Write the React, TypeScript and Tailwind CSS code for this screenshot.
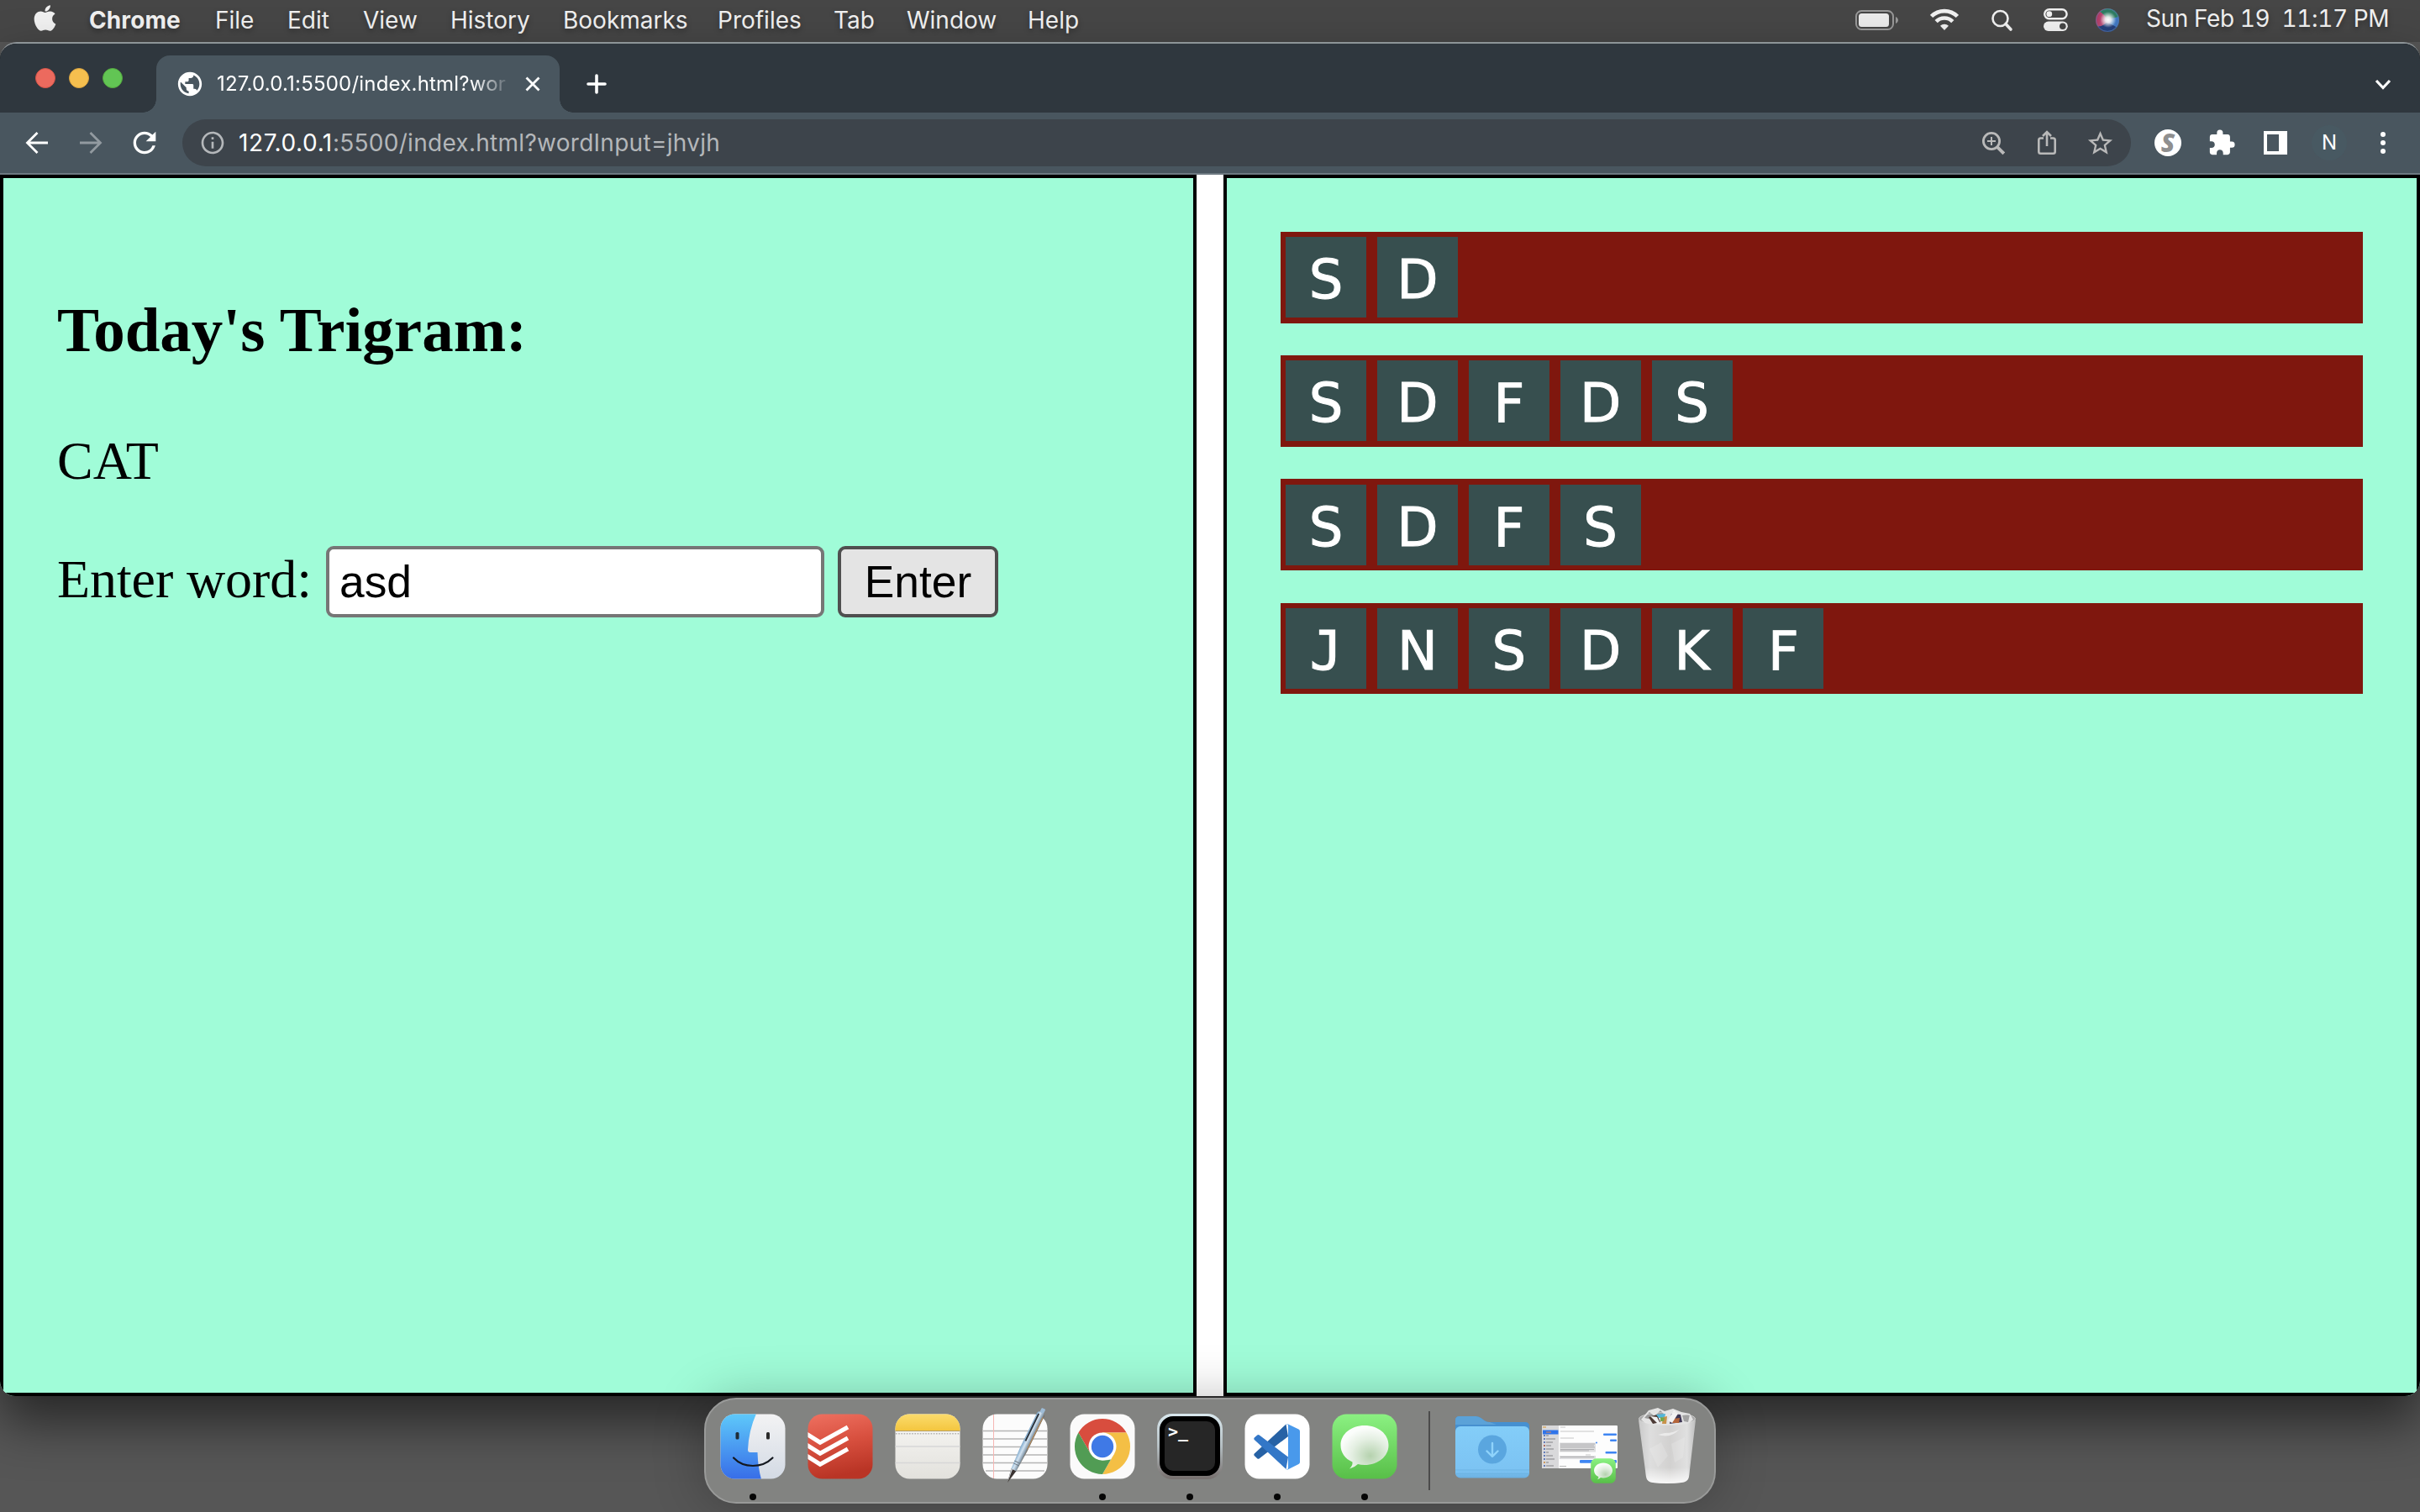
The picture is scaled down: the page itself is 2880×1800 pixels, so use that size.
import type { ReactNode } from "react";
import { FaApple } from "react-icons/fa";
import { MdExtension, MdInfoOutline, MdPublic, MdRefresh, MdStarBorder } from "react-icons/md";

const menuItems = [
  { label: "File", cls: "w-[86px]" },
  { label: "Edit", cls: "w-[90px]" },
  { label: "View", cls: "w-[104px]" },
  { label: "History", cls: "w-[134px]" },
  { label: "Bookmarks", cls: "w-[184px]" },
  { label: "Profiles", cls: "w-[138px]" },
  { label: "Tab", cls: "w-[87px]" },
  { label: "Window", cls: "w-[144px]" },
  { label: "Help", cls: "w-[80px]" },
];

const words = ["SD", "SDFDS", "SDFS", "JNSDKF"];

function MenuBar() {
  return (
    <header className="flex h-[50px] shrink-0 items-start bg-[#464646] pl-[36px] pr-[35px] text-[28px] leading-[48px] text-[#f0f0f0] [text-shadow:0_3px_6px_rgba(0,0,0,0.35)]">
      <FaApple size={35} className="mt-[4px] shrink-0" />
      <span className="ml-[35px] w-[150px] font-bold tracking-[0.1px]">Chrome</span>
      {menuItems.map((m) => (
        <span key={m.label} className={"shrink-0 whitespace-nowrap " + m.cls}>{m.label}</span>
      ))}
      <div className="ml-auto flex items-start">
        <svg width="52" height="48" viewBox="0 0 52 48" className="mr-[37px]">
          <rect x="1" y="13" width="44" height="22" rx="6.5" fill="none" stroke="#989898" strokeWidth="2" />
          <rect x="4" y="16" width="36" height="16" rx="3.5" fill="#ebebeb" />
          <path d="M48 20c4 2 4 6 0 8z" fill="#989898" />
        </svg>
        <svg width="34" height="48" viewBox="0 0 34 48" className="mr-[39px]" fill="none" stroke="#f0f0f0" strokeWidth="4.6">
          <path d="M1.6 19.5C10 11 24 11 32.4 19.5" />
          <path d="M7.2 25.6C12.5 20.2 21.500 20.2 26.800 25.600" />
          <path d="M17 36l-5-5.200c2.600-2.800 7.400-2.800 10 0z" fill="#f0f0f0" stroke="none" />
        </svg>
        <svg width="26" height="48" viewBox="0 0 26 48" className="mr-[36px]" fill="none" stroke="#f0f0f0" strokeWidth="2.6">
          <circle cx="10.500" cy="22" r="9" />
          <path d="M17 28.500l6 6.500" strokeWidth="3.600" strokeLinecap="round" />
        </svg>
        <svg width="29" height="48" viewBox="0 0 29 48" className="mr-[33px]">
          <rect x="1.200" y="11.200" width="26.400" height="11" rx="5.500" fill="none" stroke="#f0f0f0" strokeWidth="2.400" />
          <circle cx="6.800" cy="16.700" r="3.400" fill="#f0f0f0" />
          <rect x="0" y="25.500" width="28.800" height="11.500" rx="5.700" fill="#f0f0f0" />
          <circle cx="22.800" cy="31.200" r="3.800" fill="#464646" />
        </svg>
        <svg width="28" height="48" viewBox="0 0 28 48" className="mr-[32px]">
          <defs>
            <linearGradient id="siri" x1="0" y1="0.4" x2="1" y2="0.6">
              <stop offset="0" stopColor="#b0305c" />
              <stop offset="0.35" stopColor="#b8577f" />
              <stop offset="0.7" stopColor="#4a86c8" />
              <stop offset="1" stopColor="#3b6fc0" />
            </linearGradient>
            <radialGradient id="siriGlow" cx="0.53" cy="0.48" r="0.34">
              <stop offset="0" stopColor="#fff" />
              <stop offset="0.35" stopColor="#fff" stopOpacity="0.85" />
              <stop offset="1" stopColor="#fff" stopOpacity="0" />
            </radialGradient>
          </defs>
          <circle cx="14" cy="24" r="14" fill="url(#siri)" />
          <path d="M5 13.500A14 14 0 0 1 27.500 20Q18 22 14 23Q10 17 5 13.500z" fill="#2f7d63" />
          <path d="M2 31.500A14 14 0 0 0 25 32.500Q18 28 13 27Q7 32 2 31.500z" fill="#24407c" />
          <circle cx="14" cy="24" r="13.400" fill="none" stroke="#5b7fae" strokeWidth="1" strokeOpacity="0.7" />
          <circle cx="14" cy="24" r="14" fill="url(#siriGlow)" />
        </svg>
        <span className="w-[291px] whitespace-pre leading-[45px] tabular-nums tracking-[-0.4px]">Sun Feb 19  11:17 PM</span>
      </div>
    </header>
  );
}

function TabStrip() {
  return (
    <div className="flex h-[82px] items-stretch bg-[#2f373e]">
      <div className="flex items-start gap-4 pl-[42px] pt-[29px]">
        <span className="size-6 rounded-full border border-[#d65549] bg-[#ec6a5e]" />
        <span className="size-6 rounded-full border border-[#d9a33f] bg-[#f5bf4f]" />
        <span className="size-6 rounded-full border border-[#55a93f] bg-[#62c554]" />
      </div>
      <span className="ml-[24px] size-4 self-end bg-[radial-gradient(circle_at_0_0,transparent_15.500px,#49565f_16px)]" />
      <div className="mt-[14px] flex w-[480px] items-center rounded-t-[16px] bg-[#49565f] pl-[23px] text-white">
        <MdPublic size={34} className="shrink-0" />
        <span className="ml-[15px] w-[351px] whitespace-nowrap text-[24px] tracking-[0.2px] [mask-image:linear-gradient(to_right,black_305px,transparent_351px)]">
          127.0.0.1:5500/index.html?wor
        </span>
        <svg width="18" height="18" viewBox="0 0 18 18" className="ml-[16px]" stroke="#fff" strokeWidth="2.800">
          <path d="M1.500 1.500l15 15M16.500 1.500l-15 15" />
        </svg>
      </div>
      <span className="size-4 self-end bg-[radial-gradient(circle_at_100%_0,transparent_15.500px,#49565f_16px)]" />
      <svg width="24" height="24" viewBox="0 0 24 24" className="ml-[16px] mt-[36px]" stroke="#fff" strokeWidth="3.600" strokeLinecap="round">
        <path d="M12 2v20M2 12h20" />
      </svg>
      <svg width="20" height="14" viewBox="0 0 20 14" className="ml-auto mr-[34px] mt-[42px]" fill="none" stroke="#fff" strokeWidth="3.200">
        <path d="M2 2l8 8.500 8-8.500" />
      </svg>
    </div>
  );
}

function Toolbar() {
  return (
    <div className="flex h-[74px] items-center border-b-2 border-[#6d7981] bg-[#49565f] pl-[30px] pr-[41px]">
      <svg width="28" height="28" viewBox="0 0 28 28" fill="none" stroke="#fff" strokeWidth="2.800">
        <path d="M27 14H3M14.500 2L2.500 14l12 12" />
      </svg>
      <svg width="28" height="28" viewBox="0 0 28 28" className="ml-[36px]" fill="none" stroke="#929aa0" strokeWidth="2.800">
        <path d="M1 14h24M13.500 2l12 12-12 12" />
      </svg>
      <MdRefresh size={40} className="ml-[30px] text-white" />
      <div className="ml-[25px] flex h-[56px] w-[2319px] items-center rounded-full bg-[#3d444b] pl-[20px] pr-[19px] text-[#b4b7ba]">
        <MdInfoOutline size={32} />
        <span className="ml-[15px] whitespace-nowrap text-[28px] tracking-[0.28px]">
          <span className="tracking-[0.6px] text-white">127.0.0.1</span>:5500/index.html?wordInput=jhvjh
        </span>
        <svg width="28" height="30" viewBox="0 0 28 30" className="ml-auto" fill="none" stroke="#b9b9b9" strokeWidth="2.800">
          <circle cx="12" cy="13" r="9.600" />
          <path d="M18.800 19.800l8 8" strokeWidth="3.800" />
          <path d="M12 8v10M7 13h10" strokeWidth="2" />
        </svg>
        <svg width="24" height="30" viewBox="0 0 24 30" className="ml-[38px]" fill="none" stroke="#b9b9b9" strokeWidth="2.600">
          <path d="M8 9.500H4.500Q2.300 9.500 2.300 11.700V25.500Q2.300 27.700 4.500 27.700H19.500Q21.700 27.700 21.700 25.500V11.700Q21.700 9.500 19.500 9.500H16M12 19V2.500M7 7l5-5 5 5" />
        </svg>
        <MdStarBorder size={35} className="ml-[34px] text-[#b9b9b9]" />
      </div>
      <div className="ml-auto flex items-center">
        <span className="flex size-8 items-center justify-center rounded-full bg-white font-['Open_Sans'] text-[30px] font-extrabold italic leading-none text-[#8f8f8f]">S</span>
        <MdExtension size={34} className="ml-[31px] text-white" />
        <span className="ml-[33px] size-7 border-y-[4px] border-l-[4px] border-r-[10px] border-white" />
        <span className="ml-[29px] flex size-[42px] items-center justify-center rounded-full bg-[#485962] text-[24px] text-white">N</span>
        <span className="ml-[40px] flex flex-col gap-1">
          <span className="size-[6px] rounded-full bg-white" />
          <span className="size-[6px] rounded-full bg-white" />
          <span className="size-[6px] rounded-full bg-white" />
        </span>
      </div>
    </div>
  );
}

function WordRow({ word }: { word: string }) {
  return (
    <div className="flex h-[108.500px] items-center gap-[12.900px] bg-[#7f170e] pl-[6px]">
      {word.split("").map((ch, i) => (
        <span
          key={i}
          className={
            "h-[96px] w-[96px] bg-[#374f4f] text-center text-[64px] leading-[103px] text-white [-webkit-text-stroke:1px_white] " +
            (ch === "J" ? "font-['DejaVu_Sans_Mono']" : "font-['DejaVu_Sans']")
          }
        >
          {ch}
        </span>
      ))}
    </div>
  );
}

function Page() {
  return (
    <main className="flex h-[1454px] justify-between bg-white text-black">
      <section className="w-[1424px] border-4 border-black bg-[#a0fcd8] px-[64px] pt-[139px] font-['Liberation_Serif']">
        <h2 className="text-[75px] font-bold leading-[84px]">Today&apos;s Trigram:</h2>
        <p className="mt-[78px] text-[64px] leading-[72px]">CAT</p>
        <form className="mt-[65px] flex h-[85px] items-start" onSubmit={(e) => e.preventDefault()}>
          <label htmlFor="word" className="w-[320px] whitespace-nowrap text-[64px] leading-[79px] tracking-[-0.1px]">Enter word:</label>
          <input
            id="word"
            defaultValue="asd"
            className="h-[85px] w-[593px] rounded-[9px] border-4 border-[#767676] bg-white px-[12px] font-['Liberation_Sans'] text-[53.333px] outline-none"
          />
          <button className="ml-[16px] h-[85px] w-[191px] rounded-[9px] border-4 border-[#4f4f4f] bg-[#e4e4e4] text-center font-['Liberation_Sans'] text-[53.333px] leading-[77px]">
            Enter
          </button>
        </form>
      </section>
      <section className="flex w-[1424px] flex-col gap-[38.700px] border-4 border-black bg-[#a0fcd8] px-[64px] pt-[64px]">
        {words.map((w) => (
          <WordRow key={w} word={w} />
        ))}
      </section>
    </main>
  );
}

function DockItem({ running, children }: { running?: boolean; children: ReactNode }) {
  return (
    <div className="flex w-[78px] flex-col items-center">
      {children}
      {running && <span className="mt-[17px] size-2 rounded-full bg-[#060606]" />}
    </div>
  );
}

function Finder() {
  return (
    <svg width="78" height="78" viewBox="0 0 78 78">
      <defs>
        <linearGradient id="fb" x1="0" y1="0" x2="0" y2="1"><stop offset="0" stopColor="#5ec9fa" /><stop offset="1" stopColor="#376de8" /></linearGradient>
        <linearGradient id="fw" x1="0" y1="0" x2="0" y2="1"><stop offset="0" stopColor="#f3f3f4" /><stop offset="1" stopColor="#d3dae4" /></linearGradient>
        <clipPath id="fc"><rect x="0.5" y="0.5" width="77" height="77" rx="17" /></clipPath>
      </defs>
      <g clipPath="url(#fc)">
        <rect width="78" height="78" fill="url(#fw)" />
        <path d="M0 0H43Q34 20 33 43Q33 46 36 46H44.500Q45 64 49 78H0z" fill="url(#fb)" />
      </g>
      <rect x="18.500" y="22" width="4" height="8.500" rx="1.500" fill="#1f2c38" />
      <rect x="55" y="22" width="4" height="8.500" rx="1.500" fill="#2a2a2a" />
      <path d="M16 52.500Q25 62 39 62Q53 62 62.500 52.500" fill="none" stroke="#14181f" strokeWidth="2.200" strokeLinecap="round" />
    </svg>
  );
}

function Todoist() {
  return (
    <svg width="78" height="78" viewBox="0 0 78 78">
      <defs>
        <linearGradient id="td" x1="0" y1="0" x2="0.2" y2="1"><stop offset="0" stopColor="#ef7161" /><stop offset="0.5" stopColor="#d8503f" /><stop offset="1" stopColor="#b93425" /></linearGradient>
        <clipPath id="tc"><rect x="0.5" y="0.5" width="77" height="77" rx="17" /></clipPath>
      </defs>
      <g clipPath="url(#tc)">
        <rect width="78" height="78" fill="url(#td)" />
        <g fill="none" stroke="#fff" strokeWidth="5.200">
          <path d="M-2 23.500L15 34.200L48 16" />
          <path d="M-2 36.500L15 47.200L48 29" />
          <path d="M-2 49.500L15 60.200L48 42" />
        </g>
      </g>
    </svg>
  );
}

function Notes() {
  return (
    <svg width="78" height="78" viewBox="0 0 78 78">
      <defs>
        <linearGradient id="ny" x1="0" y1="0" x2="0" y2="1"><stop offset="0" stopColor="#fbdc6e" /><stop offset="1" stopColor="#f4c63f" /></linearGradient>
        <linearGradient id="nw" x1="0" y1="0" x2="0" y2="1"><stop offset="0" stopColor="#f9f8f6" /><stop offset="1" stopColor="#e2e1dc" /></linearGradient>
        <clipPath id="nc"><rect x="0.5" y="0.5" width="77" height="77" rx="17" /></clipPath>
      </defs>
      <g clipPath="url(#nc)">
        <rect width="78" height="78" fill="url(#nw)" />
        <rect width="78" height="20" fill="url(#ny)" />
        <path d="M0 20.500H78" stroke="#b7a067" strokeWidth="1.200" />
        <path d="M1 23.800H78" stroke="#b2b2b0" strokeWidth="1.600" strokeDasharray="1.600 1.600" />
        <path d="M0 39H78M0 58.500H78" stroke="#d6d6d7" strokeWidth="1.300" />
      </g>
    </svg>
  );
}

function TextEdit() {
  return (
    <svg width="78" height="78" viewBox="0 0 78 78" overflow="visible">
      <defs>
        <linearGradient id="pen" x1="0" y1="0" x2="1" y2="0"><stop offset="0" stopColor="#7fa9cc" /><stop offset="0.4" stopColor="#d4e4f2" /><stop offset="0.75" stopColor="#8ea3b5" /><stop offset="1" stopColor="#6c6358" /></linearGradient>
      </defs>
      <rect x="0.5" y="0.5" width="77" height="77" rx="17" fill="#fcfcfc" />
      <path d="M1 20.500H77M1 30H77M1 39.500H77M1 49H77M1 58.500H77M4 68H74" stroke="#b5b5b5" strokeWidth="1.300" />
      <path d="M13.500 1V77" stroke="#f6b6b3" strokeWidth="1" />
      <g transform="translate(30 82) rotate(26)">
        <path d="M0 0L-3.300-17H3.300z" fill="#3a3331" />
        <path d="M0 0L-1.500-17H-3.300z" fill="#c9ced2" />
        <path d="M-3.300-17L-4.800-44V-90Q-4.800-93-1-93H1Q4.800-93 4.800-90V-44L3.300-17z" fill="url(#pen)" />
        <path d="M-3.600-24H3.600M-3.800-27H3.800" stroke="#717c85" strokeWidth="1" />
        <rect x="-2.400" y="-98" width="5" height="5.500" rx="1" fill="#9dbbd6" />
        <path d="M-2.500-90V-54" stroke="#2b3138" strokeWidth="1.800" />
        <path d="M3.800-88V-46" stroke="#b98b58" strokeWidth="1" />
      </g>
    </svg>
  );
}

function ChromeIcon() {
  return (
    <svg width="78" height="78" viewBox="0 0 78 78">
      <rect x="0.5" y="0.5" width="77" height="77" rx="17" fill="#fafafa" />
      <g transform="translate(39 39)">
        <path d="M-28.600-16.500A33 33 0 0 1 28.600-16.500H0V0L-14.300 8.200z" fill="#d84d3e" />
        <path d="M28.600-16.500A33 33 0 0 1 0 33L14.300 8.200L0-16.500z" fill="#f4bf45" />
        <path d="M0 33A33 33 0 0 1-28.600-16.500L-14.300 8.200Q-8 16 0 16.500Q6 16.500 10 15.500z" fill="#519c54" />
        <circle r="16.500" fill="#fff" />
        <circle r="13.200" fill="#3f79e6" />
      </g>
    </svg>
  );
}

function Terminal() {
  return (
    <div className="size-[78px] rounded-[18px] bg-gradient-to-b from-[#d9e8ee] via-[#b4bec2] to-[#77706e] p-[3px]">
      <div className="h-[71px] rounded-[16px] border-[6px] border-black bg-[#262626] pl-[4px] font-['DejaVu_Sans_Mono'] text-[20px] font-bold leading-[24px] text-white">
        &gt;_
      </div>
    </div>
  );
}

function VSCode() {
  return (
    <svg width="78" height="78" viewBox="0 0 78 78">
      <rect x="0.5" y="0.5" width="77" height="77" rx="17" fill="#fff" />
      <path d="M49.500 12.500L11.800 47.500Q10.800 48.700 11.800 50L15.200 53.200Q16.500 54.200 17.800 53.200L52 27z" fill="#2762a5" />
      <path d="M49.500 66L11.800 31Q10.800 29.700 11.800 28.500L15.200 25.500Q16.500 24.500 17.800 25.500L52 51.500z" fill="#3377c7" />
      <path d="M51.500 12.200L64.500 18.500Q66 19.400 66 21V57.500Q66 59.200 64.500 60L51.500 66.500Q50 67 49 66Q52 67.500 52 64V14.500Q52 11.500 49 12.500Q50 11.500 51.500 12.200z" fill="#4999eb" />
    </svg>
  );
}

function Messages({ size }: { size: number }) {
  const id = "msg" + size;
  return (
    <svg width={size} height={size} viewBox="0 0 78 78">
      <defs>
        <linearGradient id={id} x1="0" y1="0" x2="0" y2="1"><stop offset="0" stopColor="#8bf182" /><stop offset="1" stopColor="#58bf48" /></linearGradient>
        <radialGradient id={id + "b"} cx="0.62" cy="0.7" r="0.65"><stop offset="0" stopColor="#b5d2ae" /><stop offset="0.6" stopColor="#e4efe2" /><stop offset="1" stopColor="#fbfdfb" /></radialGradient>
      </defs>
      <rect x="0.5" y="0.5" width="77" height="77" rx="17" fill={"url(#" + id + ")"} />
      <path d="M39 14C55 14 67.500 24 67.500 37.500S55 61 39 61Q34.500 61 31 60Q27 64 21 65.500Q25 61.500 24.500 57.500C15.500 53.500 10.500 46 10.500 37.500C10.500 24 23 14 39 14z" fill={"url(#" + id + "b)"} />
    </svg>
  );
}

function Downloads() {
  return (
    <svg width="90" height="78" viewBox="0 0 90 78" className="mt-[1px] shrink-0">
      <defs>
        <linearGradient id="fl" x1="0" y1="0" x2="0" y2="1"><stop offset="0" stopColor="#83cdf8" /><stop offset="0.85" stopColor="#7cc3f3" /><stop offset="1" stopColor="#6bb0e2" /></linearGradient>
      </defs>
      <path d="M1 22V7Q1 2 6 2H25Q29 2 32 4.500L36 7.500Q38.500 9 42 9H84Q89 9 89 14V30H1z" fill="#4690d0" />
      <path d="M1 12V7Q1 2 6 2H25Q29 2 32 4.500L36 7.500Q38.500 9 42 9L50 12z" fill="#5ba2d8" />
      <rect x="1" y="14" width="88" height="61.500" rx="6" fill="url(#fl)" />
      <path d="M1 66H89M1 70.500H89" stroke="#6cb3e3" strokeWidth="1" />
      <circle cx="45" cy="41.500" r="17" fill="#5aa6df" />
      <path d="M45 34V49M38.500 43.500L45 50L51.500 43.500" fill="none" stroke="#8fd3fb" strokeWidth="2.400" strokeLinecap="round" strokeLinejoin="round" />
    </svg>
  );
}

function MinimizedWindow() {
  return (
    <div className="relative mt-[14px] h-[51px] w-[90px] shrink-0">
      <svg width="90" height="51" viewBox="0 0 90 51">
        <rect width="90" height="51" rx="1" fill="#fdfdfd" />
        <rect width="20" height="51" fill="#d9d9db" />
        <rect y="5.500" x="1" width="18.500" height="5" fill="#2f74ea" />
        <path d="M1 2h4" stroke="#d9a24c" strokeWidth="1.200" />
        <g fill="#3e5fae">
          <circle cx="3" cy="12" r="1" /><circle cx="3" cy="16" r="1" /><circle cx="3" cy="20" r="1" /><circle cx="3" cy="24" r="1" fill="#a0483a" /><circle cx="3" cy="28" r="1" /><circle cx="3" cy="32" r="1" /><circle cx="3" cy="36" r="1" /><circle cx="3" cy="40" r="1" /><circle cx="3" cy="44" r="1" fill="#c98435" /><circle cx="3" cy="48" r="1" />
        </g>
        <path d="M5 8h6" stroke="#e28a54" strokeWidth="1" />
        <path d="M5 12h3M5 16h11M5 20h8M5 24h6M5 28h9M5 32h3M5 36h8M5 40h10M5 44h3M5 48h9" stroke="#838387" strokeWidth="1" />
        <path d="M22 2h6M22 7h40M22 15h16M52 35h6" stroke="#c0c0c0" strokeWidth="0.900" />
        <rect x="21" y="20.500" width="43" height="11" fill="#dededf" />
        <path d="M22 22h41M22 24h40M22 26h41M22 28.500h40M22 30h34" stroke="#a2a2a4" strokeWidth="0.800" />
        <rect x="21" y="36" width="43" height="4" fill="#dcdcde" />
        <path d="M22 37.500h40" stroke="#a2a2a4" strokeWidth="0.800" />
        <g fill="#3f86f3">
          <rect x="73" y="9.500" width="16" height="2.500" rx="1" /><rect x="81" y="16.500" width="8" height="2.500" rx="1" /><rect x="75.500" y="31" width="13.500" height="2.500" rx="1" /><rect x="45" y="41" width="44" height="3.800" rx="1" /><circle cx="65" cy="20.500" r="1" />
        </g>
        <path d="M21 48.500h8" stroke="#b8b8b8" strokeWidth="1" />
      </svg>
      <span className="absolute left-[58px] top-[39px]">
        <Messages size={30} />
      </span>
    </div>
  );
}

function Trash() {
  return (
    <svg width="70" height="92" viewBox="0 0 70 92" className="-mt-[8px] shrink-0">
      <defs>
        <linearGradient id="tr" x1="0" y1="0" x2="1" y2="0"><stop offset="0" stopColor="#c9c9c9" /><stop offset="0.2" stopColor="#dedede" /><stop offset="0.55" stopColor="#d2d1d0" /><stop offset="0.85" stopColor="#e0e0e0" /><stop offset="1" stopColor="#bfbfbf" /></linearGradient>
        <linearGradient id="trb" x1="0" y1="0" x2="0" y2="1"><stop offset="0.75" stopColor="#fff" stopOpacity="0" /><stop offset="1" stopColor="#fff" stopOpacity="0.850" /></linearGradient>
      </defs>
      <ellipse cx="35" cy="14" rx="33.500" ry="7.500" fill="#a9a9a9" />
      <path d="M4 15L13 4L24 1L32 5L42 2L52 6L62 8L66 15L58 22H12z" fill="#e4e4e4" />
      <path d="M8 13L14 6L20 11L27 4L31 8L22 16z" fill="#9b9b9b" />
      <path d="M13 12L23 9L27 18L18 20z" fill="#4c3a35" />
      <path d="M22 9L33 8L32 13L25 13z" fill="#51b6d8" />
      <path d="M30 12L35 11L34 20L29 20z" fill="#c9924a" />
      <path d="M27 12L32 13L31 17L27 17z" fill="#78a64a" />
      <path d="M40 8L51 9L53 18L38 20z" fill="#3e3653" />
      <path d="M42 14L50 13L49 19L41 19z" fill="#b4653a" />
      <path d="M36 16L43 4L48 8L41 19z" fill="#f3f3f3" />
      <path d="M15 11L23 12L27 20L24 20z" fill="#f0f0f0" />
      <path d="M53 10L62 9L60 18L55 17z" fill="#a2a2a2" />
      <path d="M1 15Q8 21 35 21Q62 21 69 15L61 83Q60 89 52 90Q35 92 18 90Q11 89 10 83z" fill="url(#tr)" />
      <path d="M1 15Q8 21 35 21Q62 21 69 15L61 83Q60 89 52 90Q35 92 18 90Q11 89 10 83z" fill="url(#trb)" />
      <path d="M24 33Q40 38 50 26Q44 31 32 31z" fill="#f3f3f3" fillOpacity="0.700" />
      <path d="M14 50L28 42L36 58L24 72zM40 44L56 36L54 60L44 66z" fill="#fff" fillOpacity="0.160" />
      <ellipse cx="35" cy="14" rx="33.500" ry="7.500" fill="none" stroke="#e6e6e6" strokeWidth="1" strokeOpacity="0.700" />
    </svg>
  );
}

function Dock() {
  return (
    <nav className="absolute left-[838px] top-[1664px] flex h-[126px] w-[1204px] items-start rounded-[38px] border-2 border-[#999a99] bg-[#828381] pl-[17px] pt-[17px] shadow-[0_0_60px_rgba(0,0,0,0.25)]">
      <div className="flex gap-[26px]">
        <DockItem running><Finder /></DockItem>
        <DockItem><Todoist /></DockItem>
        <DockItem><Notes /></DockItem>
        <DockItem><TextEdit /></DockItem>
        <DockItem running><ChromeIcon /></DockItem>
        <DockItem running><Terminal /></DockItem>
        <DockItem running><VSCode /></DockItem>
        <DockItem running><Messages size={78} /></DockItem>
      </div>
      <span className="-mt-[3px] ml-[37px] h-[94px] w-[2px] bg-[#4b4b4b]" />
      <div className="ml-[29px] flex items-start gap-[14px]">
        <Downloads />
        <MinimizedWindow />
        <span className="ml-[10px]"><Trash /></span>
      </div>
    </nav>
  );
}

export default function App() {
  return (
    <div className="relative flex h-[1800px] w-[2880px] flex-col overflow-hidden bg-[#565656] font-['Inter',sans-serif]">
      <MenuBar />
      <div className="overflow-hidden rounded-t-[20px] rounded-b-[18px] border-t-2 border-[#8d9498] bg-black shadow-[0_30px_60px_rgba(0,0,0,0.55)]">
        <TabStrip />
        <Toolbar />
        <Page />
      </div>
      <Dock />
    </div>
  );
}
